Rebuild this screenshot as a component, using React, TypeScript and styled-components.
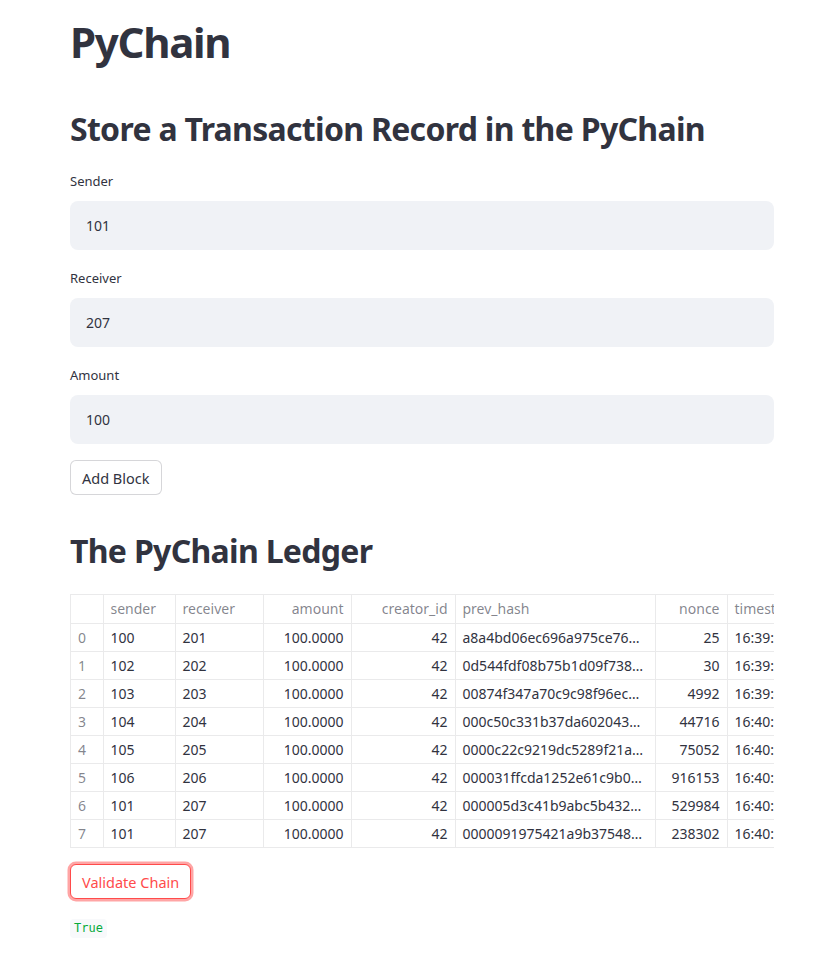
import React from "react";
import styled, { createGlobalStyle } from "styled-components";

const Global = createGlobalStyle`
  html, body { margin: 0; padding: 0; background: #ffffff; }
  body { font-family: "Noto Sans", "Open Sans", sans-serif; color: rgb(49, 51, 63); }
  * { box-sizing: border-box; }
`;

const Main = styled.main`
  width: 817px;
  padding: 14px 43px 24px 70px;
  display: flex;
  flex-direction: column;
`;

const Title = styled.h1`
  margin: 0;
  font-size: 42px;
  font-weight: 700;
  line-height: 56px;
  letter-spacing: -1.3px;
  color: rgb(49, 51, 63);
`;

const SubTitle = styled.h2<{ $top: number }>`
  margin: ${(p) => p.$top}px 0 0 0;
  font-size: 32px;
  font-weight: 700;
  line-height: 44px;
  letter-spacing: -0.7px;
  color: rgb(49, 51, 63);
`;

const Field = styled.div`
  display: flex;
  flex-direction: column;
  margin-top: 19px;
  &:first-of-type { margin-top: 21px; }
`;

const Label = styled.label`
  font-size: 13px;
  line-height: 18px;
  margin-bottom: 11px;
  color: rgb(49, 51, 63);
`;

const Input = styled.div`
  height: 49px;
  background: rgb(240, 242, 246);
  border-radius: 8px;
  display: flex;
  align-items: center;
  padding-left: 16px;
  font-size: 14px;
  color: rgb(49, 51, 63);
`;

const Button = styled.button<{ $active?: boolean }>`
  align-self: flex-start;
  font-family: inherit;
  font-size: 14.5px;
  height: 35px;
  padding: 0 11px;
  border-radius: 6px;
  background: #fff;
  cursor: pointer;
  color: ${(p) => (p.$active ? "rgb(255, 75, 75)" : "rgb(49, 51, 63)")};
  border: 1px solid ${(p) => (p.$active ? "rgb(255, 75, 75)" : "rgba(49, 51, 63, 0.2)")};
  box-shadow: ${(p) => (p.$active ? "0 0 0 2.5px rgba(255, 75, 75, 0.5)" : "none")};
`;

const TableWrap = styled.div`
  margin-top: 21px;
  width: 704px;
  overflow: hidden;
  border: 1px solid rgba(49, 51, 63, 0.1);
  border-right: none;
`;

const Table = styled.table`
  border-collapse: collapse;
  table-layout: fixed;
  font-size: 14px;
  white-space: nowrap;
`;

const Th = styled.th<{ $right?: boolean; $w: number }>`
  width: ${(p) => p.$w}px;
  min-width: ${(p) => p.$w}px;
  max-width: ${(p) => p.$w}px;
  height: 28px;
  padding: 0 7px;
  font-weight: 400;
  text-align: ${(p) => (p.$right ? "right" : "left")};
  color: rgba(49, 51, 63, 0.6);
  border-left: 1px solid rgba(49, 51, 63, 0.1);
  border-bottom: 1px solid rgba(49, 51, 63, 0.1);
  overflow: hidden;
  text-overflow: clip;
  &:first-child { border-left: none; }
`;

const Td = styled.td<{ $right?: boolean; $index?: boolean }>`
  height: 28px;
  padding: 0 7px;
  text-align: ${(p) => (p.$right ? "right" : "left")};
  color: ${(p) => (p.$index ? "rgba(49, 51, 63, 0.6)" : "rgb(49, 51, 63)")};
  border-left: 1px solid rgba(49, 51, 63, 0.1);
  border-bottom: 1px solid rgba(49, 51, 63, 0.1);
  overflow: hidden;
  text-overflow: clip;
  &:first-child { border-left: none; }
`;

const Tr = styled.tr`
  &:last-child td { border-bottom: none; }
`;

const Code = styled.code`
  align-self: flex-start;
  margin-top: 20px;
  padding: 1px 4px;
  border-radius: 4px;
  background: rgb(248, 249, 251);
  color: rgb(9, 171, 59);
  font-family: "DejaVu Sans Mono", monospace;
  font-size: 12px;
  line-height: 17px;
`;

const cols = [
  { key: "idx", label: "", w: 32, right: false },
  { key: "sender", label: "sender", w: 72, right: false },
  { key: "receiver", label: "receiver", w: 88, right: false },
  { key: "amount", label: "amount", w: 88, right: true },
  { key: "creator", label: "creator_id", w: 104, right: true },
  { key: "hash", label: "prev_hash", w: 200, right: false },
  { key: "nonce", label: "nonce", w: 72, right: true },
  { key: "ts", label: "timestamp", w: 100, right: false },
];

const rows = [
  ["0", "100", "201", "100.0000", "42", "a8a4bd06ec696a975ce76…", "25", "16:39:12"],
  ["1", "102", "202", "100.0000", "42", "0d544fdf08b75b1d09f738…", "30", "16:39:28"],
  ["2", "103", "203", "100.0000", "42", "00874f347a70c9c98f96ec…", "4992", "16:39:44"],
  ["3", "104", "204", "100.0000", "42", "000c50c331b37da602043…", "44716", "16:40:01"],
  ["4", "105", "205", "100.0000", "42", "0000c22c9219dc5289f21a…", "75052", "16:40:18"],
  ["5", "106", "206", "100.0000", "42", "000031ffcda1252e61c9b0…", "916153", "16:40:35"],
  ["6", "101", "207", "100.0000", "42", "000005d3c41b9abc5b432…", "529984", "16:40:51"],
  ["7", "101", "207", "100.0000", "42", "0000091975421a9b37548…", "238302", "16:40:59"],
];

const fields = [
  { label: "Sender", value: "101" },
  { label: "Receiver", value: "207" },
  { label: "Amount", value: "100" },
];

export default function App() {
  return (
    <>
      <Global />
      <Main>
        <Title>PyChain</Title>
        <SubTitle $top={37}>Store a Transaction Record in the PyChain</SubTitle>
        {fields.map((f) => (
          <Field key={f.label}>
            <Label>{f.label}</Label>
            <Input>{f.value}</Input>
          </Field>
        ))}
        <Button style={{ marginTop: 16 }}>Add Block</Button>
        <SubTitle $top={34}>The PyChain Ledger</SubTitle>
        <TableWrap>
          <Table>
            <thead>
              <tr>
                {cols.map((c) => (
                  <Th key={c.key} $w={c.w} $right={c.right}>
                    {c.label}
                  </Th>
                ))}
              </tr>
            </thead>
            <tbody>
              {rows.map((r) => (
                <Tr key={r[0]}>
                  {r.map((v, i) => (
                    <Td key={i} $right={cols[i].right} $index={i === 0}>
                      {v}
                    </Td>
                  ))}
                </Tr>
              ))}
            </tbody>
          </Table>
        </TableWrap>
        <Button $active style={{ marginTop: 16 }}>Validate Chain</Button>
        <Code>True</Code>
      </Main>
    </>
  );
}
